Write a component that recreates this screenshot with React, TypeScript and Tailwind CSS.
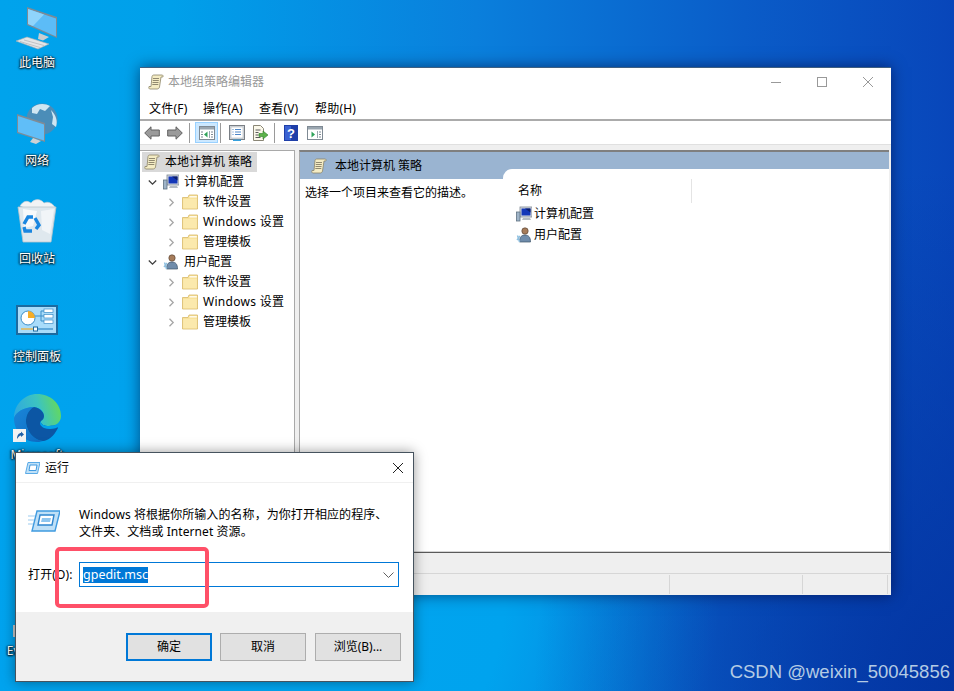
const font = "font-['Noto_Sans','Noto_Sans_CJK_SC',sans-serif]";

function ScrollIcon() {
  return (
    <svg width="16" height="16" viewBox="0 0 16 16" className="shrink-0">
      <path d="M4 2.5 C4 1.5 5 1 6 1 L14 1 C15 1 15.5 2 14.8 3 L13 3 L11.5 13 C11.3 14.5 10 15 9 15 L2 15 C1 15 .5 14 1 12.5 L3 12.5 Z" fill="#f4ecc4" stroke="#8c8468" strokeWidth=".8" />
      <path d="M5 4.5h6M4.8 6.5h6M4.5 8.5h6M4.3 10.5h6" stroke="#77705a" strokeWidth=".8" />
    </svg>
  );
}

function FolderIcon() {
  return (
    <svg width="16" height="16" viewBox="0 0 16 16" className="shrink-0">
      <path d="M.5 3.5 L6 3.5 L7 1 L15.5 1 L15.5 15 L.5 15 Z" fill="#f8e29a" stroke="#d8b968" strokeWidth=".8" />
      <path d="M1.2 5 L14.8 5 L14.8 14.3 L1.2 14.3 Z" fill="#fbe9ad" />
      <path d="M7.5 2.8 L14.8 2.8" stroke="#fff" strokeWidth="1.2" />
    </svg>
  );
}

function ComputerSmall() {
  return (
    <svg width="16" height="16" viewBox="0 0 16 16" className="shrink-0">
      <rect x="4" y="1" width="12" height="10" fill="#d8dde3" stroke="#7d8792" strokeWidth=".8" />
      <rect x="5.5" y="2.5" width="9" height="7" fill="#1437b8" />
      <path d="M9 2.5h5.5v4z" fill="#0c1f6b" />
      <path d="M7 12h7l1 2H6z" fill="#b5bcc4" />
      <rect x=".5" y="6" width="3.5" height="9" fill="#9fb4c8" stroke="#5f7282" strokeWidth=".8" />
    </svg>
  );
}

function UserSmall() {
  return (
    <svg width="16" height="16" viewBox="0 0 16 16" className="shrink-0">
      <circle cx="9" cy="4" r="3.2" fill="#a67c5a" stroke="#4f3a2c" strokeWidth=".6" />
      <path d="M3.5 15 C3.5 9.5 6 8 9 8 C12.5 8 14.5 10 14.5 15 Z" fill="#6f8cab" stroke="#3d5369" strokeWidth=".7" />
      <path d="M1.5 8.5 L3.5 15 M4 9 L1 13" stroke="#8fc0e0" strokeWidth="1.4" />
    </svg>
  );
}

function Chevron({ open }: { open: boolean }) {
  return (
    <svg width="9" height="9" viewBox="0 0 9 9" className="shrink-0">
      {open ? (
        <path d="M.8 2.5 L4.5 6.2 L8.2 2.5" fill="none" stroke="#404040" strokeWidth="1.3" />
      ) : (
        <path d="M2.5 .8 L6.2 4.5 L2.5 8.2" fill="none" stroke="#a6a6a6" strokeWidth="1.3" />
      )}
    </svg>
  );
}

function ArrowIcon({ flip }: { flip?: boolean }) {
  return (
    <svg width="16" height="14" viewBox="0 0 16 14" className={flip ? "-scale-x-100" : ""}>
      <path d="M.7 7 L7 .8 L7 4 L15.3 4 L15.3 10 L7 10 L7 13.2 Z" fill="#9a9a9a" stroke="#606060" strokeWidth="1" />
    </svg>
  );
}

function ToolSep() {
  return <div className="w-px h-[20px] bg-[#9a9a9a] shrink-0" />;
}

function PanelToggleIcon() {
  return (
    <svg width="16" height="14" viewBox="0 0 16 14">
      <rect x=".5" y=".5" width="15" height="13" fill="#fff" stroke="#7f8a94" />
      <rect x="1" y="1" width="14" height="2.5" fill="#9aa6b0" />
      <path d="M10.5 5v7" stroke="#9aa6b0" />
      <path d="M8.5 5.5 L5 8.5 L8.5 11.5 Z" fill="#2fa35a" />
      <path d="M2 6h2M2 8.5h2M2 11h2M12 6h2M12 8.5h2M12 11h2" stroke="#7f8a94" />
    </svg>
  );
}

function PropertiesIcon() {
  return (
    <svg width="16" height="16" viewBox="0 0 16 16">
      <rect x=".5" y=".5" width="15" height="14" fill="#d5d9dd" stroke="#7a7f85" />
      <rect x="2" y="2" width="12" height="11" fill="#fff" stroke="#b0b6bc" strokeWidth=".6" />
      <path d="M3.5 4.5h1M6 4.5h6M3.5 7h1M6 7h6M3.5 9.5h1M6 9.5h6" stroke="#4d86c6" />
      <rect x="4" y="14.5" width="8" height="1.5" fill="#35a0dd" />
    </svg>
  );
}

function ExportIcon() {
  return (
    <svg width="16" height="16" viewBox="0 0 16 16">
      <path d="M1.5 .5 L8.5 .5 L11.5 3.5 L11.5 15.5 L1.5 15.5 Z" fill="#fbf8ea" stroke="#8a8676" />
      <path d="M3.5 5h5M3.5 7.5h3M3.5 10h3M3.5 12.5h5" stroke="#5b5b5b" />
      <path d="M7 8.5h4V6l5 4-5 4v-2.5H7z" fill="#5cb24a" stroke="#2f7f2c" strokeWidth=".6" />
    </svg>
  );
}

function HelpIcon() {
  return (
    <svg width="14" height="16" viewBox="0 0 14 16">
      <rect width="14" height="16" fill="#1f3fa8" />
      <rect x="1" y="1" width="6" height="14" fill="#3b62d2" />
      <text x="7" y="13" textAnchor="middle" fontSize="13" fontWeight="700" fontFamily="Liberation Sans" fill="#fff">?</text>
    </svg>
  );
}

function ActionPaneIcon() {
  return (
    <svg width="16" height="14" viewBox="0 0 16 14">
      <rect x=".5" y=".5" width="15" height="13" fill="#fff" stroke="#7f8a94" />
      <rect x="1" y="1" width="14" height="2.5" fill="#9aa6b0" />
      <path d="M10.5 5v7" stroke="#9aa6b0" />
      <path d="M4.5 5.5 L8 8.5 L4.5 11.5 Z" fill="#2fa35a" />
      <path d="M12 6h2M12 8.5h2M12 11h2" stroke="#7f8a94" />
    </svg>
  );
}

function TreeRow({ level, label, icon, open }: { level: 1 | 2; label: string; icon: React.ReactNode; open: boolean }) {
  return (
    <div className={`flex items-center h-[20px] ${level === 1 ? "pl-[6px]" : "pl-[25px]"}`}>
      <Chevron open={open} />
      <span className="ml-[6px] mr-[5px]">{icon}</span>
      <span className={`whitespace-nowrap ${label.startsWith("Windows") ? "tracking-[0.3px]" : ""}`}>{label}</span>
    </div>
  );
}

function MainWindow() {
  return (
    <div className={`absolute left-[140px] top-[67px] w-[751px] h-[528px] flex flex-col bg-white border-t border-[#3f5f80] shadow-[0_0_14px_rgba(0,0,40,0.55)] text-[12px] text-black ${font}`}>
      <div className="h-[28px] flex items-center justify-between shrink-0">
        <div className="flex items-center pl-[8px] gap-[4px] text-[#999999]">
          <ScrollIcon />
          <span>本地组策略编辑器</span>
        </div>
        <div className="flex">
          <div className="w-[46px] h-[28px] flex items-center justify-center">
            <div className="w-[10px] h-px bg-[#999999]" />
          </div>
          <div className="w-[46px] h-[28px] flex items-center justify-center">
            <div className="w-[10px] h-[10px] border border-[#999999]" />
          </div>
          <div className="w-[46px] h-[28px] flex items-center justify-center">
            <svg width="10" height="10" viewBox="0 0 10 10">
              <path d="M0 0 L10 10 M10 0 L0 10" stroke="#999999" strokeWidth="1" />
            </svg>
          </div>
        </div>
      </div>
      <div className="h-[25px] flex items-center pl-[9px] pt-[2px] border-b-2 border-[#ababab] tracking-[0.2px] shrink-0">
        <span className="w-[54px]">文件(F)</span>
        <span className="w-[56px]">操作(A)</span>
        <span className="w-[56px]">查看(V)</span>
        <span>帮助(H)</span>
      </div>
      <div className="h-[23px] flex items-center pl-[4px] shrink-0">
        <ArrowIcon />
        <span className="w-[7px]" />
        <ArrowIcon flip />
        <span className="w-[6px]" />
        <ToolSep />
        <div className="ml-[5px] w-[23px] h-[21px] flex items-center justify-center bg-[#cce8ff] border border-[#99d1ff]">
          <PanelToggleIcon />
        </div>
        <span className="w-[2px]" />
        <ToolSep />
        <span className="w-[8px]" />
        <PropertiesIcon />
        <span className="w-[7px]" />
        <ExportIcon />
        <span className="w-[6px]" />
        <ToolSep />
        <span className="w-[9px]" />
        <HelpIcon />
        <span className="w-[9px]" />
        <ActionPaneIcon />
      </div>
      <div className="flex-1 flex flex-col bg-[#efefef] border-t border-[#e0e0e0] pt-[5px] pr-[2px] min-h-0">
        <div className="flex-1 flex gap-[4px] min-h-0">
          <div className="w-[155px] bg-white border-t border-r border-[#a9a9a9] pl-[2px] pt-px shrink-0 overflow-hidden">
            <div className="flex items-center h-[20px] w-[115px] bg-[#d9d9d9] pl-[2px] gap-[5px]">
              <ScrollIcon />
              <span className="whitespace-nowrap">本地计算机 策略</span>
            </div>
            <TreeRow level={1} open label="计算机配置" icon={<ComputerSmall />} />
            <TreeRow level={2} open={false} label="软件设置" icon={<FolderIcon />} />
            <TreeRow level={2} open={false} label="Windows 设置" icon={<FolderIcon />} />
            <TreeRow level={2} open={false} label="管理模板" icon={<FolderIcon />} />
            <TreeRow level={1} open label="用户配置" icon={<UserSmall />} />
            <TreeRow level={2} open={false} label="软件设置" icon={<FolderIcon />} />
            <TreeRow level={2} open={false} label="Windows 设置" icon={<FolderIcon />} />
            <TreeRow level={2} open={false} label="管理模板" icon={<FolderIcon />} />
          </div>
          <div className="flex-1 flex bg-white border-t-2 border-l border-b border-t-[#7f7f7f] border-l-[#a9a9a9] border-b-[#d4d4d4] min-w-0">
            <div className="w-[203px] shrink-0">
              <div className="h-[27px] bg-[#9ab4d1] flex items-center pl-[11px] gap-[8px]">
                <ScrollIcon />
                <span>本地计算机 策略</span>
              </div>
              <div className="pl-[5px] pt-[5px]">选择一个项目来查看它的描述。</div>
            </div>
            <div className="flex-1 bg-[#9ab4d1] flex flex-col min-w-0">
              <div className="h-[17px] shrink-0" />
              <div className="flex-1 bg-white rounded-tl-[9px]">
                <div className="flex h-[34px] items-center">
                  <span className="pl-[15px] w-[189px] h-[24px] mt-[10px] flex items-center border-r border-[#e4e4e4]">名称</span>
                </div>
                <div className="flex items-center h-[21px] pl-[13px] gap-[2px]">
                  <ComputerSmall />
                  <span>计算机配置</span>
                </div>
                <div className="flex items-center h-[21px] pl-[13px] gap-[2px]">
                  <UserSmall />
                  <span>用户配置</span>
                </div>
              </div>
            </div>
          </div>
        </div>
      </div>
      <div className="h-[21px] bg-[#efefef] border-t border-[#5a5a5a] shrink-0" />
      <div className="h-[22px] bg-[#efefef] border-t border-[#d6d6d6] flex shrink-0 py-[1px]">
        <div className="w-[530px] border-r border-[#d6d6d6]" />
        <div className="w-[133px] border-r border-[#d6d6d6]" />
        <div className="w-[85px] border-r border-[#d6d6d6]" />
      </div>
    </div>
  );
}

function RunIcon() {
  return (
    <svg width="32" height="22" viewBox="0 0 32 22">
      <path d="M9 1 L32 1 L27 21 L4 21 Z" fill="#bfe0f7" stroke="#3f9ae0" strokeWidth="1.4" />
      <path d="M12 5 L26 5 L24 15 L10 15 Z" fill="#fff" stroke="#2f86cf" strokeWidth="1.4" />
      <path d="M14 8 L23 8 L22 12 L13 12 Z" fill="#8fc6ef" />
      <path d="M0 6h7M0 10h6M0 14h5" stroke="#9ccbef" strokeWidth="1.2" />
    </svg>
  );
}

function DialogButton({ label, primary }: { label: React.ReactNode; primary?: boolean }) {
  return (
    <div className={`w-[86px] h-[28px] flex items-center justify-center bg-[#e1e1e1] ${primary ? "border-2 border-[#0078d7]" : "border border-[#adadad]"}`}>
      {label}
    </div>
  );
}

function RunDialog() {
  return (
    <div className={`absolute left-[15px] top-[452px] w-[399px] h-[230px] flex flex-col bg-white border border-[#46535e] shadow-[0_0_12px_rgba(0,0,0,0.4)] text-[12px] text-black ${font}`}>
      <div className="h-[30px] flex items-center justify-between border-b border-[#f0f0f0] shrink-0">
        <div className="flex items-center pl-[8px] gap-[5px]">
          <svg width="16" height="12" viewBox="0 0 16 12">
            <path d="M4 .5 L16 .5 L13.5 11.5 L1.5 11.5 Z" fill="#bfe0f7" stroke="#5aaae6" />
            <path d="M6 3 L13 3 L12 8.5 L5 8.5 Z" fill="#fff" stroke="#3f9ae0" />
          </svg>
          <span>运行</span>
        </div>
        <svg width="12" height="12" viewBox="0 0 12 12" className="mr-[9px]">
          <path d="M1 1 L11 11 M11 1 L1 11" stroke="#222222" strokeWidth="1" />
        </svg>
      </div>
      <div className="flex-1 flex flex-col">
        <div className="flex pl-[12px] pt-[27px]">
          <RunIcon />
          <div className="ml-[19px] mt-[-4px] leading-[17px] tracking-[0.07px]">
            <div>Windows 将根据你所输入的名称，为你打开相应的程序、</div>
            <div>文件夹、文档或 Internet 资源。</div>
          </div>
        </div>
        <div className="flex items-center pl-[12px] mt-[22px]">
          <span className="w-[51px] tracking-[0.15px]">打开(O):</span>
          <div className="w-[320px] h-[25px] border border-[#0078d7] flex items-center justify-between pl-[3px] pr-[4px]">
            <span className="bg-[#0078d7] text-white h-[16px] leading-[16px] text-[12.5px]">gpedit.msc</span>
            <svg width="11" height="6" viewBox="0 0 11 6">
              <path d="M.5 .5 L5.5 5.5 L10.5 .5" fill="none" stroke="#606060" />
            </svg>
          </div>
        </div>
      </div>
      <div className="h-[69px] bg-[#f0f0f0] flex justify-end gap-[8px] pr-[12px] pt-[21px] shrink-0">
        <DialogButton primary label="确定" />
        <DialogButton label="取消" />
        <div className="ml-px">
          <DialogButton label="浏览(B)..." />
        </div>
      </div>
    </div>
  );
}

function PcIcon() {
  return (
    <svg width="48" height="48" viewBox="0 0 48 48">
      <path d="M14 5 L44 15 L44 36 L14 23 Z" fill="#7d8a95" />
      <path d="M15 7 L43 16.5 L43 34.5 L15 22 Z" fill="#5cbcf7" />
      <path d="M15 7 L31 12.5 L20 24 L15 22 Z" fill="#8fd4fb" />
      <path d="M26 31 L36 35 L30 38.5 L25 37 Z" fill="#c9cdd0" />
      <path d="M3 39 L14 35 L36 42 L25 47 Z" fill="#e3e5e7" stroke="#a8acb0" strokeWidth=".6" />
      <path d="M7 39.5 L27 45.5 M11 38 L31 43.5" stroke="#b5b8bb" strokeWidth=".8" />
    </svg>
  );
}

function NetworkIcon() {
  return (
    <svg width="48" height="48" viewBox="0 0 48 48">
      <circle cx="29" cy="19" r="15.5" fill="#4b8db8" />
      <path d="M19 8 C24 3 32 3 37 6 L32 11 L27 9 L24 14 L19 13 Z M38 10 C43 15 45 21 43 27 L39 24 L40 17 Z" fill="#cfe6f2" />
      <path d="M4 14 L32 23 L32 42 L4 33 Z" fill="#7f8b96" />
      <path d="M5 16 L31 24.5 L31 40.5 L5 32 Z" fill="#60bef8" />
      <path d="M20 38 L28 41 L23 44 L17 42 Z" fill="#cdd1d4" />
    </svg>
  );
}

function BinIcon() {
  return (
    <svg width="48" height="48" viewBox="0 0 48 48">
      <path d="M7 8 C10 3 14 2 18 5 C22 0 28 1 31 5 C35 3 39 5 42 9 L24 15 Z" fill="#f1f3f5" stroke="#c5cbd0" strokeWidth=".6" />
      <path d="M5 9 L43 9 L38 44 L10 44 Z" fill="#dfe8ee" stroke="#bac5cc" strokeWidth=".8" />
      <path d="M10 11 L24 13 L20 28 L11 30 Z" fill="#fff" opacity=".75" />
      <path d="M28 13 L41 11 L37 36 L29 32 Z" fill="#f5f8fa" opacity=".8" />
      <path d="M11 26 L15 19 L20 19 M22 20 L26 27 L23 31 M19 33 L12 33 L11 29" fill="none" stroke="#1a86e0" strokeWidth="3.4" />
    </svg>
  );
}

function ControlPanelIcon() {
  return (
    <svg width="48" height="48" viewBox="0 0 48 48">
      <rect x="3" y="9" width="42" height="30" fill="#1c6a9f" />
      <rect x="5" y="11" width="38" height="26" fill="#a9dcfa" />
      <circle cx="15" cy="22" r="7" fill="#fff" stroke="#3c8ec8" strokeWidth="1" />
      <path d="M15 22 L15 15 A7 7 0 0 1 22 22 Z" fill="#f5ad27" />
      <path d="M22 20 H28 V15 H31 M28 20 H31 M28 20 V25 H31" fill="none" stroke="#3c8ec8" />
      <rect x="31" y="13" width="9" height="3.5" fill="#fff" stroke="#3c8ec8" strokeWidth=".7" />
      <rect x="31" y="18.5" width="9" height="3.5" fill="#fff" stroke="#3c8ec8" strokeWidth=".7" />
      <rect x="31" y="24" width="9" height="3.5" fill="#fff" stroke="#3c8ec8" strokeWidth=".7" />
      <path d="M8 33 H22" stroke="#f5ad27" strokeWidth="1.2" />
      <path d="M22 33 H40" stroke="#2f86c6" strokeWidth="1.2" />
      <rect x="20.5" y="31" width="4" height="4" fill="#fff" stroke="#1c6a9f" />
    </svg>
  );
}

function EdgeIcon() {
  return (
    <svg width="48" height="48" viewBox="0 0 48 48" className="relative">
      <defs>
        <linearGradient id="edgeTop" x1="0" y1="0.6" x2="1" y2="0.4">
          <stop offset="0" stopColor="#2fa8e0" />
          <stop offset="0.55" stopColor="#3cc4c0" />
          <stop offset="1" stopColor="#66d95a" />
        </linearGradient>
        <linearGradient id="edgeLeft" x1="0" y1="0" x2="1" y2="1">
          <stop offset="0" stopColor="#1a86d8" />
          <stop offset="1" stopColor="#0f6cc4" />
        </linearGradient>
      </defs>
      <path d="M1 24 C1 10 12 0 24 0 C38 0 48 10 48 22 C48 29 42 32 36 32 C31 32 27 30 28 27 C33 23 31 14 21 13 C11 13 3 18 1 24 Z" fill="url(#edgeTop)" />
      <path d="M1 24 C3 18 11 13 21 13 C15 16 11 24 14 33 C16 40 22 46 30 47 C27 48 25 48 24 48 C10 48 1 37 1 24 Z" fill="url(#edgeLeft)" />
      <path d="M21 13 C27 14 31 18 31 22 C31 24 30 26 28 27 C27 30 31 32 36 32 C40 32 44 31 45 34 C41 42 35 47 30 47 C22 46 16 40 14 33 C11 24 15 16 21 13 Z" fill="#0c56a4" />
      <path d="M28 27 C27 30 31 32 36 32 C40 32 44 31 46 30 L46 32 C44 35 36 36 31 34 C27 32 26 29 28 27 Z" fill="#00a2ea" />
      <rect x="0" y="35" width="13" height="13" fill="#f2f2f2" />
      <path d="M4 45 C4 41 6 39 8 39 L8 37.5 L11 40.5 L8 43 L8 41.5 C6.5 41.5 5.5 43 4 45 Z" fill="#1f5fa8" />
    </svg>
  );
}

function HiddenIcon() {
  // only its left edge shows past the run dialog
  return (
    <svg width="48" height="48" viewBox="0 0 48 48">
      <rect x="0" y="35" width="3" height="12" fill="#c9c9c9" />
    </svg>
  );
}

const deskLabel =
  "mt-[5px] leading-[16px] text-[12px] text-white text-center [text-shadow:0_1px_2px_rgba(0,0,0,0.95),1px_0_2px_rgba(0,0,0,0.7),-1px_0_2px_rgba(0,0,0,0.7)]";

function DesktopItem({ icon, label }: { icon: React.ReactNode; label: string }) {
  return (
    <div className="h-[98px] flex flex-col items-center">
      {icon}
      <div className={deskLabel}>{label}</div>
    </div>
  );
}

export default function App() {
  return (
    <div className={`relative w-[954px] h-[691px] overflow-hidden bg-[radial-gradient(ellipse_420px_520px_at_954px_691px,#0335a2_0%,rgba(3,53,162,0)_100%),radial-gradient(ellipse_480px_420px_at_240px_600px,#00a6f0_0%,#00a3ee_55%,rgba(0,163,238,0)_100%),linear-gradient(90deg,#00a3ec_0%,#00a0ea_18%,#0a7fdc_50%,#0a5cc8_78%,#0846ba_100%)] ${font}`}>
      <div className="absolute left-0 top-[2px] w-[74px] flex flex-col">
        <DesktopItem icon={<PcIcon />} label="此电脑" />
        <DesktopItem icon={<NetworkIcon />} label="网络" />
        <DesktopItem icon={<BinIcon />} label="回收站" />
        <DesktopItem icon={<ControlPanelIcon />} label="控制面板" />
        <DesktopItem icon={<EdgeIcon />} label="Microsoft Edge" />
        <div className="h-[98px]" />
        <DesktopItem icon={<HiddenIcon />} label="Everything" />
      </div>
      <MainWindow />
      <RunDialog />
      <div className="absolute left-[55px] top-[547px] w-[154px] h-[61px] rounded-[5px] border-[4px] border-[#ff5068]" />
      <div className="absolute right-[4px] bottom-[9px] text-[18.5px] leading-[20px] text-[#b4cbe4] font-['Liberation_Sans',sans-serif]">
        CSDN @weixin_50045856
      </div>
    </div>
  );
}
